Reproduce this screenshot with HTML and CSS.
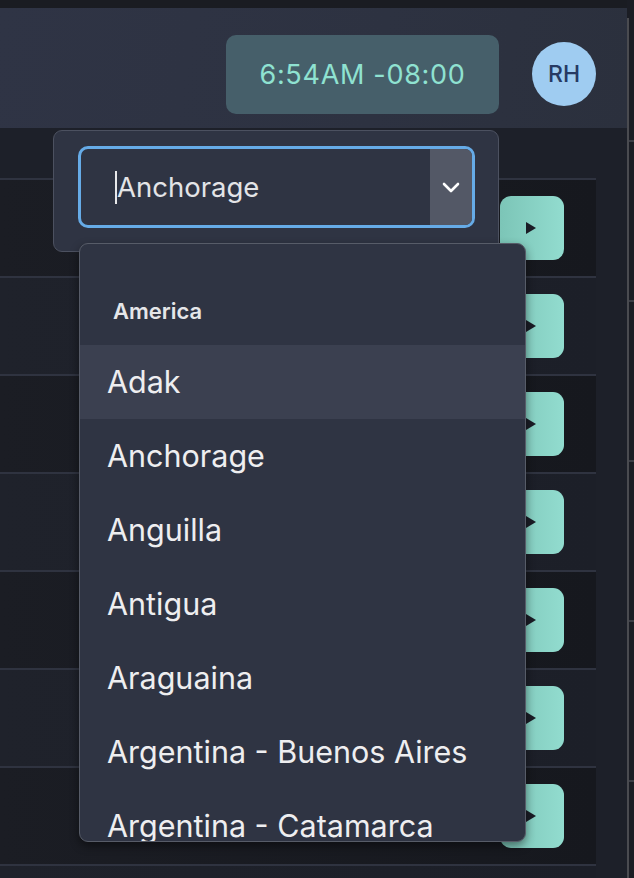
FILE: index.html
```html
<!DOCTYPE html>
<html lang="en">
<head>
<meta charset="utf-8">
<title>Timezone picker</title>
<link rel="stylesheet" href="styles.css">
</head>
<body>
<div class="app">
  <div class="main">
    <div class="topbar"></div>
    <header class="header">
      <div class="time-badge">6:54AM -08:00</div>
      <div class="avatar">RH</div>
    </header>
    <div class="content">
      <div class="table-head"></div>
      <div class="rows">
        <div class="row odd"><button class="play"><svg width="10" height="12" viewBox="0 0 10 12"><path d="M0 0 L10 6 L0 12 Z"/></svg></button></div>
        <div class="row even"><button class="play"><svg width="10" height="12" viewBox="0 0 10 12"><path d="M0 0 L10 6 L0 12 Z"/></svg></button></div>
        <div class="row odd"><button class="play"><svg width="10" height="12" viewBox="0 0 10 12"><path d="M0 0 L10 6 L0 12 Z"/></svg></button></div>
        <div class="row even"><button class="play"><svg width="10" height="12" viewBox="0 0 10 12"><path d="M0 0 L10 6 L0 12 Z"/></svg></button></div>
        <div class="row odd"><button class="play"><svg width="10" height="12" viewBox="0 0 10 12"><path d="M0 0 L10 6 L0 12 Z"/></svg></button></div>
        <div class="row even"><button class="play"><svg width="10" height="12" viewBox="0 0 10 12"><path d="M0 0 L10 6 L0 12 Z"/></svg></button></div>
        <div class="row odd"><button class="play"><svg width="10" height="12" viewBox="0 0 10 12"><path d="M0 0 L10 6 L0 12 Z"/></svg></button></div>
        <div class="row even"></div>
      </div>
    </div>
  </div>
  <div class="rail"><div class="rail-track"></div></div>

  <div class="popover">
    <div class="select">
      <div class="select-input"><span class="caret"></span>Anchorage</div>
      <div class="select-toggle">
        <svg width="18" height="11" viewBox="0 0 18 11"><path d="M2 2 L9 9 L16 2" fill="none" stroke="#ffffff" stroke-width="2.6" stroke-linecap="round" stroke-linejoin="round"/></svg>
      </div>
    </div>
  </div>

  <div class="listbox">
    <div class="group-label">America</div>
    <div class="option active">Adak</div>
    <div class="option">Anchorage</div>
    <div class="option">Anguilla</div>
    <div class="option">Antigua</div>
    <div class="option">Araguaina</div>
    <div class="option">Argentina - Buenos Aires</div>
    <div class="option">Argentina - Catamarca</div>
  </div>
</div>
</body>
</html>
```

FILE: styles.css
```css
* { box-sizing: border-box; }

html, body {
  margin: 0;
  padding: 0;
  width: 634px;
  height: 878px;
  overflow: hidden;
  background: #1d2029;
  font-family: Inter, "Noto Sans", "Liberation Sans", sans-serif;
}

.app {
  position: relative;
  display: flex;
  width: 634px;
  height: 878px;
}

.main {
  width: 627px;
  display: flex;
  flex-direction: column;
  overflow: hidden;
}

.topbar {
  flex-shrink: 0;
  height: 8px;
  background: #1a1c22;
}

.header {
  flex-shrink: 0;
  height: 120px;
  background: linear-gradient(100deg, #2f3445 0%, #2d3241 60%, #2b303d 100%);
  display: flex;
  align-items: center;
  justify-content: flex-end;
  gap: 33px;
  padding: 12px 31px 0 0;
}

.time-badge {
  width: 273px;
  height: 79px;
  border-radius: 10px;
  background: #465f6a;
  color: #8fe2d1;
  font-size: 27px;
  letter-spacing: 0.7px;
  display: flex;
  align-items: center;
  justify-content: center;
}

.avatar {
  width: 64px;
  height: 64px;
  border-radius: 50%;
  background: #9fccf1;
  color: #263a63;
  font-size: 23px;
  font-weight: 500;
  display: flex;
  align-items: center;
  justify-content: center;
}

.content {
  flex: 1;
  min-height: 0;
  overflow: hidden;
  background: #1d2029;
}

.table-head {
  height: 50px;
}

.rows {
  width: 596px;
}

.row {
  height: 98px;
  border-top: 2px solid #2f3340;
  padding: 16px 0 0 500px;
}

.row.odd {
  background: linear-gradient(90deg, #1b1d24 0%, #16181e 100%);
}

.row.even {
  background: linear-gradient(90deg, #1f222b 0%, #1c1f28 100%);
}

.play {
  width: 64px;
  height: 64px;
  border: none;
  border-radius: 11px;
  background: linear-gradient(90deg, #7cc5b7 0%, #92dccf 100%);
  display: flex;
  align-items: center;
  justify-content: center;
  padding: 0;
}

.play svg {
  fill: #1a1c25;
  margin-left: -2px;
}

.rail {
  width: 7px;
  background: #1b1d24;
  padding-top: 18px;
}

.rail-track {
  height: 100%;
  border-left: 2px solid #4a4b50;
  background:
    repeating-linear-gradient(180deg, transparent 0px, transparent 122px, #3c3e46 122px, #3c3e46 124px, transparent 124px, transparent 160px);
}

.popover {
  position: absolute;
  left: 53px;
  top: 130px;
  width: 446px;
  height: 122px;
  background: #2f3443;
  border: 1px solid #4c5160;
  border-radius: 9px;
  padding: 15px 0 0 24px;
}

.select {
  width: 397px;
  height: 82px;
  border: 3px solid #66abe7;
  border-radius: 10px;
  display: flex;
  overflow: hidden;
  background: #2f3443;
}

.select-input {
  flex: 1;
  display: flex;
  align-items: center;
  padding-left: 35px;
  color: #e3e4e7;
  font-size: 27.5px;
}

.caret {
  display: inline-block;
  width: 2px;
  height: 33px;
  background: #e8e8ea;
  margin-left: -1px;
}

.select-toggle {
  width: 42px;
  background: #535866;
  display: flex;
  align-items: center;
  justify-content: center;
}

.listbox {
  position: absolute;
  left: 79px;
  top: 243px;
  width: 447px;
  height: 599px;
  background: #2f3443;
  border: 1px solid #575c68;
  border-radius: 9px;
  overflow: hidden;
  box-shadow: 0 4px 10px rgba(0, 0, 0, 0.45);
}

.group-label {
  padding: 55px 0 22px 33px;
  line-height: 24px;
  font-size: 22px;
  font-weight: 600;
  color: #e5e6e9;
}

.option {
  height: 74px;
  line-height: 74px;
  padding-left: 27px;
  font-size: 30.5px;
  color: #eeeef0;
  white-space: nowrap;
}

.option.active {
  background: #3b4050;
}
```
